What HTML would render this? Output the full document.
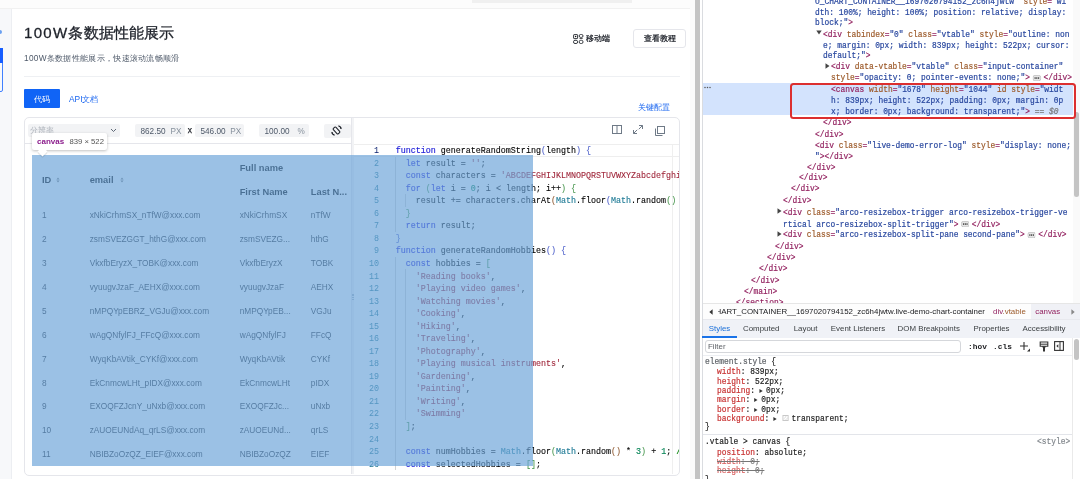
<!DOCTYPE html><html><head><meta charset="utf-8"><style>
*{margin:0;padding:0;box-sizing:border-box}
html,body{width:1080px;height:479px;overflow:hidden;background:#fff;font-family:"Liberation Sans",sans-serif}
#root{position:absolute;left:0;top:0;width:1080px;height:479px;will-change:transform}
.a{position:absolute;white-space:nowrap}
.mono{font-family:"Liberation Mono",monospace}
#page{position:absolute;left:0;top:0;width:700px;height:479px;background:#fff;overflow:hidden}
#dt{position:absolute;left:700px;top:0;width:380px;height:479px;background:#fff;overflow:hidden}
.cl{position:absolute;left:0;height:12.54px;line-height:12.54px;font-family:"Liberation Mono",monospace;font-size:8.36px;white-space:pre;color:#000;-webkit-text-stroke:0.1px currentColor}
.ln{position:absolute;width:30px;text-align:right;left:349px;height:12.54px;line-height:12.54px;font-family:"Liberation Mono",monospace;font-size:8.4px;color:#237893}
.k{color:#1c1cd8;-webkit-text-stroke:0.15px #1c1cd8}.s{color:#a0283c}.n{color:#098658;-webkit-text-stroke:0.15px #098658}.t{color:#267f99;-webkit-text-stroke:0.15px #267f99}.c{color:#008000;-webkit-text-stroke:0.15px #008000}
.b1{color:#5566cc}.b2{color:#4f9a55}.b3{color:#94603a}
.tr{position:absolute;font-size:8.3px;color:#1d2129;line-height:12px;white-space:nowrap}
.th{position:absolute;font-size:9.3px;font-weight:bold;color:#000;line-height:12px;white-space:nowrap}
.dl{position:absolute;height:11px;line-height:11px;font-family:"Liberation Mono",monospace;font-size:9.05px;white-space:pre;color:#27469e;transform:scaleX(0.873);transform-origin:0 50%;-webkit-text-stroke:0.2px currentColor}
.tg{color:#92215f;-webkit-text-stroke:0.2px #92215f}.an{color:#9c5a2a;-webkit-text-stroke:0.2px #9c5a2a}.av{color:#27469e;-webkit-text-stroke:0.2px #27469e}
.ui{font-size:7.9px}
.sl{position:absolute;height:9.44px;line-height:9.44px;font-family:"Liberation Mono",monospace;font-size:9.05px;white-space:pre;color:#1f1f1f;transform:scaleX(0.873);transform-origin:0 50%;-webkit-text-stroke:0.2px currentColor}
.pn{color:#c83232;-webkit-text-stroke:0.2px #c83232}
</style></head><body><div id="root">
<div id="page">
<div class="a" style="left:0;top:0;width:694px;height:9px;background:#fcfcfc;border-bottom:1px solid #f1f1f1"></div>
<div class="a" style="left:472px;top:0;width:160px;height:2.5px;background:#f0f0f0"></div>
<div class="a" style="left:0;top:9px;width:12px;height:470px;background:#f7f8fa;border-right:1px solid #eceef2"></div>
<div class="a" style="left:0;top:30px;width:2px;height:4px;background:#6aa0f0;border-radius:0 2px 2px 0"></div>
<div class="a" style="left:-2px;top:48px;width:5px;height:44px;border:1px solid #4080ff;border-radius:2px"></div>
<div class="a" style="left:-2px;top:48px;width:5px;height:15px;background:#165dff"></div>
<div class="a" style="left:24px;top:24px;font-size:15px;letter-spacing:0.13px;font-weight:normal;-webkit-text-stroke:0.3px #1d2129;color:#1d2129;line-height:18px"><span style="letter-spacing:1.3px">100W</span>条数据性能展示</div>
<div class="a" style="left:24px;top:52.7px;font-size:8.3px;letter-spacing:0.3px;color:#4e5969;line-height:11px">100W条数据性能展示，快速滚动流畅顺滑</div>
<svg class="a" style="left:573px;top:34px" width="11" height="11" viewBox="0 0 11 11"><g fill="none" stroke="#2b2f36" stroke-width="0.95"><rect x="0.6" y="0.6" width="4" height="4" rx="0.5"/><rect x="6.2" y="0.5" width="3.8" height="2.9" rx="1.4"/><rect x="0.5" y="6.3" width="4.1" height="3.2" rx="1.5"/><rect x="6.2" y="6.3" width="3.8" height="3.2" rx="1.5"/></g><circle cx="2.6" cy="2.6" r="0.75" fill="#111"/><rect x="6.4" y="4.1" width="3.4" height="0.8" rx="0.4" fill="#555"/></svg>
<div class="a" style="left:586px;top:33px;font-size:8.4px;color:#1d2129;line-height:11px;-webkit-text-stroke:0.25px #1d2129">移动端</div>
<div class="a" style="left:633px;top:29px;width:53px;height:19px;border:1px solid #e5e6eb;border-radius:3px;font-size:8.4px;line-height:17px;text-align:center;color:#1d2129;-webkit-text-stroke:0.25px #1d2129">查看教程</div>
<div class="a" style="left:24px;top:76px;width:656px;height:1px;background:#eef0f3"></div>
<div class="a" style="left:24px;top:89px;width:35.5px;height:18.5px;background:#1064f6;color:#fff;line-height:20.5px;text-align:center;border-radius:1px;font-size:8.4px">代码</div>
<div class="a" style="left:69px;top:90px;font-size:8.4px;line-height:19px;color:#1a66f0">API文档</div>
<div class="a" style="left:638px;top:101px;font-size:8.4px;line-height:12px;color:#1a66f0">关键配置</div>
<div class="a" style="left:24px;top:117px;width:656px;height:359px;border:1px solid #e5e6eb;border-radius:5px"></div>
<div class="a" style="left:0;top:0;width:700px;height:479px;clip-path:inset(118px 21px 5px 25px round 4px)">
<div class="a" style="left:25px;top:143px;width:326px;height:1px;background:#e5e6eb"></div>
<div class="a" style="left:28px;top:124px;width:92px;height:13px;background:#f2f3f5;border-radius:2px"></div>
<div class="a" style="left:30px;top:125px;font-size:7.9px;line-height:11px;color:#aeb3bb">分辨率</div>
<svg class="a" style="left:110px;top:128px" width="7" height="5" viewBox="0 0 7 5"><path d="M1 1 L3.5 3.5 L6 1" fill="none" stroke="#4e5969" stroke-width="0.9"/></svg>
<div class="a" style="left:135px;top:124px;width:50px;height:13px;background:#f2f3f5;border-radius:2px"></div>
<div class="a" style="left:140.5px;top:125.5px;font-size:8.2px;line-height:11px;color:#4e5969">862.50</div>
<div class="a" style="left:170.6px;top:125.5px;font-size:8.2px;line-height:11px;color:#86909c">PX</div>
<div class="a" style="left:195px;top:124px;width:49px;height:13px;background:#f2f3f5;border-radius:2px"></div>
<div class="a" style="left:200.5px;top:125.5px;font-size:8.2px;line-height:11px;color:#4e5969">546.00</div>
<div class="a" style="left:230.2px;top:125.5px;font-size:8.2px;line-height:11px;color:#86909c">PX</div>
<div class="a" style="left:259px;top:124px;width:50px;height:13px;background:#f2f3f5;border-radius:2px"></div>
<div class="a" style="left:264.5px;top:125.5px;font-size:8.2px;line-height:11px;color:#4e5969">100.00</div>
<div class="a" style="left:297.5px;top:125.5px;font-size:8.2px;line-height:11px;color:#86909c">%</div>
<div class="a" style="left:187.8px;top:125px;font-size:8.4px;line-height:11px;color:#1d2129;-webkit-text-stroke:0.25px #1d2129">x</div>
<div class="a" style="left:324px;top:123.5px;width:26.5px;height:14px;background:#f2f3f5;border-radius:2px"></div>
<svg class="a" style="left:331.4px;top:125.3px" width="11" height="11" viewBox="0 0 11 11"><g fill="none" stroke="#1d2129" stroke-width="1.05"><rect x="3.7" y="1.9" width="3.6" height="7.2" rx="0.9" transform="rotate(-42 5.5 5.5)"/><path d="M7.4 0.9 Q9.6 1.2 10.1 3.6" stroke-width="1.1"/><path d="M3.6 10.1 Q1.4 9.8 0.9 7.4" stroke-width="1.1"/></g><path d="M10.8 2.6 L10.1 4.3 L9.0 3.0 Z" fill="#1d2129"/><path d="M0.2 8.4 L0.9 6.7 L2.0 8.0 Z" fill="#1d2129"/></svg>
<div class="a" style="left:32px;top:155px;width:320px;height:311px;background:#fff"></div>
<div class="th" style="left:42px;top:174px">ID</div>
<svg class="a" style="left:56.2px;top:176.5px" width="4" height="6" viewBox="0 0 4 6"><path d="M0.4 2.4 L2 0.6 L3.6 2.4 Z M0.4 3.6 L2 5.4 L3.6 3.6 Z" fill="#777"/></svg>
<div class="th" style="left:89.7px;top:174px">email</div>
<svg class="a" style="left:119.5px;top:176.5px" width="4" height="6" viewBox="0 0 4 6"><path d="M0.4 2.4 L2 0.6 L3.6 2.4 Z M0.4 3.6 L2 5.4 L3.6 3.6 Z" fill="#777"/></svg>
<div class="th" style="left:239.7px;top:162px">Full name</div>
<div class="th" style="left:239.7px;top:185.8px">First Name</div>
<div class="th" style="left:310.8px;top:185.8px">Last N...</div>
<div class="tr" style="left:42px;top:209.40px;color:#1d2129">1</div>
<div class="tr" style="left:89.7px;top:209.40px;color:#1d2129">xNkiCrhmSX_nTfW@xxx.com</div>
<div class="tr" style="left:239.7px;top:209.40px;color:#1d2129">xNkiCrhmSX</div>
<div class="tr" style="left:310.8px;top:209.40px;color:#1d2129">nTfW</div>
<div class="tr" style="left:42px;top:233.28px;color:#1d2129">2</div>
<div class="tr" style="left:89.7px;top:233.28px;color:#1d2129">zsmSVEZGGT_hthG@xxx.com</div>
<div class="tr" style="left:239.7px;top:233.28px;color:#1d2129">zsmSVEZG...</div>
<div class="tr" style="left:310.8px;top:233.28px;color:#1d2129">hthG</div>
<div class="tr" style="left:42px;top:257.16px;color:#1d2129">3</div>
<div class="tr" style="left:89.7px;top:257.16px;color:#1d2129">VkxfbEryzX_TOBK@xxx.com</div>
<div class="tr" style="left:239.7px;top:257.16px;color:#1d2129">VkxfbEryzX</div>
<div class="tr" style="left:310.8px;top:257.16px;color:#1d2129">TOBK</div>
<div class="tr" style="left:42px;top:281.04px;color:#1d2129">4</div>
<div class="tr" style="left:89.7px;top:281.04px;color:#1d2129">vyuugvJzaF_AEHX@xxx.com</div>
<div class="tr" style="left:239.7px;top:281.04px;color:#1d2129">vyuugvJzaF</div>
<div class="tr" style="left:310.8px;top:281.04px;color:#1d2129">AEHX</div>
<div class="tr" style="left:42px;top:304.92px;color:#1d2129">5</div>
<div class="tr" style="left:89.7px;top:304.92px;color:#1d2129">nMPQYpEBRZ_VGJu@xxx.com</div>
<div class="tr" style="left:239.7px;top:304.92px;color:#1d2129">nMPQYpEB...</div>
<div class="tr" style="left:310.8px;top:304.92px;color:#1d2129">VGJu</div>
<div class="tr" style="left:42px;top:328.80px;color:#1d2129">6</div>
<div class="tr" style="left:89.7px;top:328.80px;color:#1d2129">wAgQNfylFJ_FFcQ@xxx.com</div>
<div class="tr" style="left:239.7px;top:328.80px;color:#1d2129">wAgQNfylFJ</div>
<div class="tr" style="left:310.8px;top:328.80px;color:#1d2129">FFcQ</div>
<div class="tr" style="left:42px;top:352.68px;color:#1d2129">7</div>
<div class="tr" style="left:89.7px;top:352.68px;color:#1d2129">WyqKbAVtik_CYKf@xxx.com</div>
<div class="tr" style="left:239.7px;top:352.68px;color:#1d2129">WyqKbAVtik</div>
<div class="tr" style="left:310.8px;top:352.68px;color:#1d2129">CYKf</div>
<div class="tr" style="left:42px;top:376.56px;color:#1d2129">8</div>
<div class="tr" style="left:89.7px;top:376.56px;color:#1d2129">EkCnmcwLHt_pIDX@xxx.com</div>
<div class="tr" style="left:239.7px;top:376.56px;color:#1d2129">EkCnmcwLHt</div>
<div class="tr" style="left:310.8px;top:376.56px;color:#1d2129">pIDX</div>
<div class="tr" style="left:42px;top:400.44px;color:#1d2129">9</div>
<div class="tr" style="left:89.7px;top:400.44px;color:#1d2129">EXOQFZJcnY_uNxb@xxx.com</div>
<div class="tr" style="left:239.7px;top:400.44px;color:#1d2129">EXOQFZJc...</div>
<div class="tr" style="left:310.8px;top:400.44px;color:#1d2129">uNxb</div>
<div class="tr" style="left:42px;top:424.32px;color:#1d2129">10</div>
<div class="tr" style="left:89.7px;top:424.32px;color:#1d2129">zAUOEUNdAq_qrLS@xxx.com</div>
<div class="tr" style="left:239.7px;top:424.32px;color:#1d2129">zAUOEUNd...</div>
<div class="tr" style="left:310.8px;top:424.32px;color:#1d2129">qrLS</div>
<div class="tr" style="left:42px;top:448.20px;color:#1d2129">11</div>
<div class="tr" style="left:89.7px;top:448.20px;color:#1d2129">NBIBZoOzQZ_EIEF@xxx.com</div>
<div class="tr" style="left:239.7px;top:448.20px;color:#1d2129">NBIBZoOzQZ</div>
<div class="tr" style="left:310.8px;top:448.20px;color:#1d2129">EIEF</div>
<div class="a" style="left:351px;top:118px;width:3px;height:360px;background:#f2f3f5;border-left:1px solid #e5e6eb"></div>
<div class="a" style="left:352px;top:294px;width:2px;height:6px;border-left:1px dotted #a9b4c0;border-right:1px dotted #a9b4c0"></div>
<div class="a" style="left:354px;top:144px;width:326px;height:1px;background:#e5e6eb"></div>
<svg class="a" style="left:612px;top:125px" width="10" height="9" viewBox="0 0 10 9"><g fill="none" stroke="#6f7a87" stroke-width="1"><rect x="0.5" y="0.5" width="9" height="8"/><path d="M5 0.5 V8.5"/></g></svg>
<svg class="a" style="left:633px;top:125px" width="10" height="9" viewBox="0 0 10 9"><g fill="none" stroke="#6f7a87" stroke-width="1"><path d="M6 0.5 H9.5 V4 M9.5 0.5 L5.8 4.2 M4 8.5 H0.5 V5 M0.5 8.5 L4.2 4.8"/></g></svg>
<svg class="a" style="left:655px;top:126px" width="10" height="10" viewBox="0 0 10 10"><g fill="none" stroke="#6f7a87" stroke-width="1"><rect x="2.5" y="0.5" width="7" height="7"/><path d="M0.5 2.5 V9.5 H7.5"/></g></svg>
<div class="a" style="left:354px;top:144px;width:326px;height:12.5px;border-top:1px solid #eee;border-bottom:1px solid #eee"></div>
<div class="a" style="left:671.5px;top:145px;width:1px;height:330px;background:#efefef"></div>
<div class="ln" style="top:145.10px;color:#0b216f">1</div>
<div class="cl" style="left:395.7px;top:145.10px"><span class="k">function</span> generateRandomString<span class="b1">(</span>length<span class="b1">)</span> <span class="b1">{</span></div>
<div class="ln" style="top:157.64px;color:#237893">2</div>
<div class="cl" style="left:395.7px;top:157.64px">  <span class="k">let</span> result = <span class="s">''</span>;</div>
<div class="ln" style="top:170.18px;color:#237893">3</div>
<div class="cl" style="left:395.7px;top:170.18px">  <span class="k">const</span> characters = <span class="s">'ABCDEFGHIJKLMNOPQRSTUVWXYZabcdefghijklmnopqrstuvwxyz'</span>;</div>
<div class="ln" style="top:182.72px;color:#237893">4</div>
<div class="cl" style="left:395.7px;top:182.72px">  <span class="k">for</span> <span class="b2">(</span><span class="k">let</span> i = <span class="n">0</span>; i &lt; length; i++<span class="b2">)</span> <span class="b2">{</span></div>
<div class="ln" style="top:195.26px;color:#237893">5</div>
<div class="cl" style="left:395.7px;top:195.26px">    result += characters.charAt<span class="b3">(</span><span class="t">Math</span>.floor<span class="b1">(</span><span class="t">Math</span>.random<span class="b2">()</span> * characters.length<span class="b1">)</span><span class="b3">)</span>;</div>
<div class="ln" style="top:207.80px;color:#237893">6</div>
<div class="cl" style="left:395.7px;top:207.80px">  <span class="b2">}</span></div>
<div class="ln" style="top:220.34px;color:#237893">7</div>
<div class="cl" style="left:395.7px;top:220.34px">  <span class="k">return</span> result;</div>
<div class="ln" style="top:232.88px;color:#237893">8</div>
<div class="cl" style="left:395.7px;top:232.88px"><span class="b1">}</span></div>
<div class="ln" style="top:245.42px;color:#237893">9</div>
<div class="cl" style="left:395.7px;top:245.42px"><span class="k">function</span> generateRandomHobbies<span class="b1">()</span> <span class="b1">{</span></div>
<div class="ln" style="top:257.96px;color:#237893">10</div>
<div class="cl" style="left:395.7px;top:257.96px">  <span class="k">const</span> hobbies = <span class="b2">[</span></div>
<div class="ln" style="top:270.50px;color:#237893">11</div>
<div class="cl" style="left:395.7px;top:270.50px">    <span class="s">'Reading books'</span>,</div>
<div class="ln" style="top:283.04px;color:#237893">12</div>
<div class="cl" style="left:395.7px;top:283.04px">    <span class="s">'Playing video games'</span>,</div>
<div class="ln" style="top:295.58px;color:#237893">13</div>
<div class="cl" style="left:395.7px;top:295.58px">    <span class="s">'Watching movies'</span>,</div>
<div class="ln" style="top:308.12px;color:#237893">14</div>
<div class="cl" style="left:395.7px;top:308.12px">    <span class="s">'Cooking'</span>,</div>
<div class="ln" style="top:320.66px;color:#237893">15</div>
<div class="cl" style="left:395.7px;top:320.66px">    <span class="s">'Hiking'</span>,</div>
<div class="ln" style="top:333.20px;color:#237893">16</div>
<div class="cl" style="left:395.7px;top:333.20px">    <span class="s">'Traveling'</span>,</div>
<div class="ln" style="top:345.74px;color:#237893">17</div>
<div class="cl" style="left:395.7px;top:345.74px">    <span class="s">'Photography'</span>,</div>
<div class="ln" style="top:358.28px;color:#237893">18</div>
<div class="cl" style="left:395.7px;top:358.28px">    <span class="s">'Playing musical instruments'</span>,</div>
<div class="ln" style="top:370.82px;color:#237893">19</div>
<div class="cl" style="left:395.7px;top:370.82px">    <span class="s">'Gardening'</span>,</div>
<div class="ln" style="top:383.36px;color:#237893">20</div>
<div class="cl" style="left:395.7px;top:383.36px">    <span class="s">'Painting'</span>,</div>
<div class="ln" style="top:395.90px;color:#237893">21</div>
<div class="cl" style="left:395.7px;top:395.90px">    <span class="s">'Writing'</span>,</div>
<div class="ln" style="top:408.44px;color:#237893">22</div>
<div class="cl" style="left:395.7px;top:408.44px">    <span class="s">'Swimming'</span></div>
<div class="ln" style="top:420.98px;color:#237893">23</div>
<div class="cl" style="left:395.7px;top:420.98px">  <span class="b2">]</span>;</div>
<div class="ln" style="top:433.52px;color:#237893">24</div>
<div class="cl" style="left:395.7px;top:433.52px"></div>
<div class="ln" style="top:446.06px;color:#237893">25</div>
<div class="cl" style="left:395.7px;top:446.06px">  <span class="k">const</span> numHobbies = <span class="t">Math</span>.floor<span class="b2">(</span><span class="t">Math</span>.random<span class="b3">()</span> * <span class="n">3</span><span class="b2">)</span> + <span class="n">1</span>; <span class="c">// Randomly select 1 to 3 hobbies</span></div>
<div class="ln" style="top:458.60px;color:#237893">26</div>
<div class="cl" style="left:395.7px;top:458.60px">  <span class="k">const</span> selectedHobbies = <span class="b2">[]</span>;</div>
<div class="a" style="left:394.8px;top:156.54px;width:1px;height:75.24px;background:#d3d3d3"></div>
<div class="a" style="left:404.9px;top:194.16px;width:1px;height:12.54px;background:#d3d3d3"></div>
<div class="a" style="left:394.8px;top:256.86px;width:1px;height:213.18px;background:#d3d3d3"></div>
<div class="a" style="left:404.9px;top:269.40px;width:1px;height:150.48px;background:#d3d3d3"></div>
<div class="a" style="left:32px;top:155px;width:501px;height:311px;background:rgba(108,164,217,0.68)"></div>
</div>
<div class="a" style="left:32px;top:133px;width:75px;height:17px;background:#fff;border-radius:2px;box-shadow:0 1px 3px rgba(0,0,0,0.25)"></div>
<div class="a" style="left:39px;top:148px;width:7px;height:7px;background:#fff;transform:rotate(45deg);box-shadow:1px 1px 1px rgba(0,0,0,0.12)"></div>
<div class="a" style="left:37px;top:136px;font-size:8px;line-height:11px;font-weight:bold;color:#8b1c8c">canvas</div>
<div class="a" style="left:69.5px;top:136px;font-size:7.7px;line-height:11px;color:#555">839 × 522</div>
<div class="a" style="left:690px;top:0;width:5px;height:479px;background:#fafafa"></div>
<div class="a" style="left:695px;top:0;width:5px;height:479px;background:#c3c3c3"></div>
</div>
<div id="dt">
<div class="a" style="left:2px;top:0;width:1px;height:479px;background:#dadce0"></div>
<div class="a" style="left:3px;top:83px;width:370px;height:32.3px;background:#d3e3fd"></div>
<svg class="a" style="left:4px;top:86px" width="7" height="3" viewBox="0 0 7 3"><circle cx="1" cy="1.5" r="0.75" fill="#555"/><circle cx="3.5" cy="1.5" r="0.75" fill="#555"/><circle cx="6" cy="1.5" r="0.75" fill="#555"/></svg>
<div class="dl" style="left:115.2px;top:-3.9px"><span class="av">O_CHART_CONTAINER__1697020794152_zc6h4jwtw&quot;</span> <span class="an">style</span><span class="tg">=</span><span class="av">&quot;wi</span></div>
<div class="dl" style="left:115.2px;top:7.1px"><span class="av">dth: 100%; height: 100%; position: relative; display:</span></div>
<div class="dl" style="left:115.2px;top:17.1px"><span class="av">block;&quot;</span><span class="tg">&gt;</span></div>
<div class="dl" style="left:123.2px;top:28.7px"><span class="tg">&lt;div</span> <span class="an">tabindex</span><span class="tg">=</span><span class="av">&quot;0&quot;</span> <span class="an">class</span><span class="tg">=</span><span class="av">&quot;vtable&quot;</span> <span class="an">style</span><span class="tg">=</span><span class="av">&quot;outline: non</span></div>
<div class="dl" style="left:123.2px;top:39.7px"><span class="av">e; margin: 0px; width: 839px; height: 522px; cursor:</span></div>
<div class="dl" style="left:123.2px;top:49.7px"><span class="av">default;&quot;</span><span class="tg">&gt;</span></div>
<div class="dl" style="left:131.1px;top:61.4px"><span class="tg">&lt;div</span> <span class="an">data-vtable</span><span class="tg">=</span><span class="av">&quot;vtable&quot;</span> <span class="an">class</span><span class="tg">=</span><span class="av">&quot;input-container&quot;</span></div>
<div class="dl" style="left:131.1px;top:72.4px"><span class="an">style</span><span class="tg">=</span><span class="av">&quot;opacity: 0; pointer-events: none;&quot;</span><span class="tg">&gt;</span><svg style="display:inline-block;vertical-align:middle;margin:0 2.9px;position:relative;top:-0.3px" width="9.6" height="6.2" viewBox="0 0 9.6 6.2"><rect x="0.35" y="0.35" width="8.9" height="5.5" rx="2.2" fill="#e6e6e6" stroke="#a8a8a8" stroke-width="0.6"/><circle cx="2.8" cy="3.1" r="0.8" fill="#333"/><circle cx="4.8" cy="3.1" r="0.8" fill="#333"/><circle cx="6.8" cy="3.1" r="0.8" fill="#333"/></svg><span class="tg">&lt;/div&gt;</span></div>
<div class="dl" style="left:131.1px;top:84.3px"><span class="tg">&lt;canvas</span> <span class="an">width</span><span class="tg">=</span><span class="av">&quot;1678&quot;</span> <span class="an">height</span><span class="tg">=</span><span class="av">&quot;1044&quot;</span> <span class="an">id</span> <span class="an">style</span><span class="tg">=</span><span class="av">&quot;widt</span></div>
<div class="dl" style="left:131.1px;top:95.1px"><span class="av">h: 839px; height: 522px; padding: 0px; margin: 0p</span></div>
<div class="dl" style="left:131.1px;top:106.0px"><span class="av">x; border: 0px; background: transparent;&quot;</span><span class="tg">&gt;</span><span style="color:#777;font-style:italic"> == $0</span></div>
<div class="dl" style="left:123.2px;top:116.9px"><span class="tg">&lt;/div&gt;</span></div>
<div class="dl" style="left:115.2px;top:128.6px"><span class="tg">&lt;/div&gt;</span></div>
<div class="dl" style="left:115.2px;top:139.6px"><span class="tg">&lt;div</span> <span class="an">class</span><span class="tg">=</span><span class="av">&quot;live-demo-error-log&quot;</span> <span class="an">style</span><span class="tg">=</span><span class="av">&quot;display: none;</span></div>
<div class="dl" style="left:115.2px;top:150.5px"><span class="av">&quot;</span><span class="tg">&gt;&lt;/div&gt;</span></div>
<div class="dl" style="left:107.2px;top:161.5px"><span class="tg">&lt;/div&gt;</span></div>
<div class="dl" style="left:99.3px;top:172.3px"><span class="tg">&lt;/div&gt;</span></div>
<div class="dl" style="left:91.3px;top:183.4px"><span class="tg">&lt;/div&gt;</span></div>
<div class="dl" style="left:83.3px;top:195.4px"><span class="tg">&lt;/div&gt;</span></div>
<div class="dl" style="left:83.3px;top:206.9px"><span class="tg">&lt;div</span> <span class="an">class</span><span class="tg">=</span><span class="av">&quot;arco-resizebox-trigger arco-resizebox-trigger-ve</span></div>
<div class="dl" style="left:83.3px;top:218.5px"><span class="av">rtical arco-resizebox-split-trigger&quot;</span><span class="tg">&gt;</span><svg style="display:inline-block;vertical-align:middle;margin:0 2.9px;position:relative;top:-0.3px" width="9.6" height="6.2" viewBox="0 0 9.6 6.2"><rect x="0.35" y="0.35" width="8.9" height="5.5" rx="2.2" fill="#e6e6e6" stroke="#a8a8a8" stroke-width="0.6"/><circle cx="2.8" cy="3.1" r="0.8" fill="#333"/><circle cx="4.8" cy="3.1" r="0.8" fill="#333"/><circle cx="6.8" cy="3.1" r="0.8" fill="#333"/></svg><span class="tg">&lt;/div&gt;</span></div>
<div class="dl" style="left:83.3px;top:229.3px"><span class="tg">&lt;div</span> <span class="an">class</span><span class="tg">=</span><span class="av">&quot;arco-resizebox-split-pane second-pane&quot;</span><span class="tg">&gt;</span><svg style="display:inline-block;vertical-align:middle;margin:0 2.9px;position:relative;top:-0.3px" width="9.6" height="6.2" viewBox="0 0 9.6 6.2"><rect x="0.35" y="0.35" width="8.9" height="5.5" rx="2.2" fill="#e6e6e6" stroke="#a8a8a8" stroke-width="0.6"/><circle cx="2.8" cy="3.1" r="0.8" fill="#333"/><circle cx="4.8" cy="3.1" r="0.8" fill="#333"/><circle cx="6.8" cy="3.1" r="0.8" fill="#333"/></svg><span class="tg">&lt;/div&gt;</span></div>
<div class="dl" style="left:75.4px;top:240.5px"><span class="tg">&lt;/div&gt;</span></div>
<div class="dl" style="left:67.4px;top:252.3px"><span class="tg">&lt;/div&gt;</span></div>
<div class="dl" style="left:59.4px;top:263.4px"><span class="tg">&lt;/div&gt;</span></div>
<div class="dl" style="left:51.4px;top:274.6px"><span class="tg">&lt;/div&gt;</span></div>
<div class="dl" style="left:43.5px;top:286.2px"><span class="tg">&lt;/main&gt;</span></div>
<div class="dl" style="left:35.5px;top:296.9px"><span class="tg">&lt;/section&gt;</span></div>
<svg class="a" style="left:116.2px;top:30.3px" width="6" height="5" viewBox="0 0 6 5"><path d="M0.3 0.5 H5.7 L3 4.5 Z" fill="#444"/></svg>
<svg class="a" style="left:124.6px;top:62.8px" width="5" height="6" viewBox="0 0 5 6"><path d="M0.5 0.3 V5.7 L4.5 3 Z" fill="#444"/></svg>
<svg class="a" style="left:76.8px;top:208.3px" width="5" height="6" viewBox="0 0 5 6"><path d="M0.5 0.3 V5.7 L4.5 3 Z" fill="#444"/></svg>
<svg class="a" style="left:76.8px;top:230.7px" width="5" height="6" viewBox="0 0 5 6"><path d="M0.5 0.3 V5.7 L4.5 3 Z" fill="#444"/></svg>
<div class="a" style="left:373px;top:0;width:7px;height:303px;background:#fafafa"></div>
<div class="a" style="left:374px;top:112px;width:5px;height:85px;background:#c4c4c4;border-radius:3px"></div>
<div class="a" style="left:3px;top:303px;width:377px;height:16px;background:#fdfdfd;border-top:1px solid #e6e6e6"></div>
<svg class="a" style="left:8.5px;top:308.5px" width="4" height="6" viewBox="0 0 4 6"><path d="M3.6 0.3 V5.7 L0.3 3 Z" fill="#333"/></svg>
<div class="a ui" style="left:18px;top:304px;width:300px;height:15px;overflow:hidden"><div class="a ui" style="left:-2.5px;top:0;line-height:15px;color:#202124">HART_CONTAINER__1697020794152_zc6h4jwtw.live-demo-chart-container</div></div>
<div class="a ui" style="left:293px;top:304px;line-height:15px"><span style="color:#92215f">div</span><span style="color:#9c5a2a">.vtable</span></div>
<div class="a" style="left:331px;top:304px;width:49px;height:14.5px;background:#f0f1f6"></div>
<div class="a ui" style="left:335.2px;top:304px;line-height:15px;color:#92215f">canvas</div>
<svg class="a" style="left:371px;top:309px" width="4" height="6" viewBox="0 0 4 6"><path d="M0.4 0.3 V5.7 L3.7 3 Z" fill="#888"/></svg>
<div class="a" style="left:3px;top:318.5px;width:377px;height:19px;background:#f0f2f7;border-top:1px solid #e8e9ee"></div>
<div class="a ui" style="left:8.8px;top:322.5px;line-height:12px;color:#1a6fd8">Styles</div>
<div class="a ui" style="left:43.0px;top:322.5px;line-height:12px;color:#3c4043">Computed</div>
<div class="a ui" style="left:93.7px;top:322.5px;line-height:12px;color:#3c4043">Layout</div>
<div class="a ui" style="left:130.8px;top:322.5px;line-height:12px;color:#3c4043">Event Listeners</div>
<div class="a ui" style="left:197.6px;top:322.5px;line-height:12px;color:#3c4043">DOM Breakpoints</div>
<div class="a ui" style="left:273.5px;top:322.5px;line-height:12px;color:#3c4043">Properties</div>
<div class="a ui" style="left:322.6px;top:322.5px;line-height:12px;color:#3c4043">Accessibility</div>
<div class="a" style="left:2px;top:336.3px;width:34.5px;height:1.6px;background:#1a73e8"></div>
<div class="a" style="left:4.5px;top:340px;width:256px;height:12.5px;border:1px solid #d5d7db;border-radius:3px;background:#fff"></div>
<div class="a ui" style="left:8px;top:340.5px;line-height:11.5px;color:#5f6368">Filter</div>
<div class="a mono" style="left:268px;top:340.5px;line-height:11.5px;font-size:7.87px;font-weight:bold;color:#202124">:hov</div>
<div class="a mono" style="left:293px;top:340.5px;line-height:11.5px;font-size:7.87px;font-weight:bold;color:#202124">.cls</div>
<svg class="a" style="left:319px;top:341px" width="12" height="11" viewBox="0 0 12 11"><path d="M5 1 V9 M1 5 H9" stroke="#333" stroke-width="1.1" fill="none"/><path d="M11 7.5 V10.5 H8 Z" fill="#333"/></svg>
<svg class="a" style="left:338.5px;top:340.5px" width="10" height="11" viewBox="0 0 10 11"><path d="M1.2 1 H8.8 V5.2 H1.2 Z" fill="none" stroke="#333" stroke-width="1.1"/><path d="M1.2 3.2 H8.8" stroke="#333" stroke-width="1"/><path d="M3 5.2 H7 L6 7 V10.5 H4 V7 Z" fill="#333"/></svg>
<svg class="a" style="left:354px;top:341px" width="10" height="10" viewBox="0 0 10 10"><rect x="0.6" y="0.6" width="8.8" height="8.8" fill="none" stroke="#333" stroke-width="1.1"/><path d="M6 0.6 V9.4" stroke="#333" stroke-width="1"/><path d="M4.3 3.2 V6.8 L2.3 5 Z" fill="#333"/></svg>
<div class="a" style="left:3px;top:354.5px;width:369px;height:1px;background:#eceef2"></div>
<div class="a" style="left:371.5px;top:338px;width:1px;height:141px;background:#eaeaea"></div>
<div class="a" style="left:374px;top:339px;width:4.5px;height:21px;background:#c4c4c4;border-radius:3px"></div>
<div class="sl" style="left:5.4px;top:356.58px"><span style="color:#5f6368">element.style</span> {</div>
<div class="sl" style="left:17.2px;top:367.38px"><span class="pn">width</span>: 839px;</div>
<div class="sl" style="left:17.2px;top:376.78px"><span class="pn">height</span>: 522px;</div>
<div class="sl" style="left:17.2px;top:386.18px"><span class="pn">padding</span>: <span style="display:inline-block;width:7.3px;position:relative"><svg style="position:absolute;left:-1.2px;top:-5px" width="5" height="6" viewBox="0 0 5 6"><path d="M0.6 0.9 V5.1 L4.4 3 Z" fill="#333"/></svg></span>0px;</div>
<div class="sl" style="left:17.2px;top:395.48px"><span class="pn">margin</span>: <span style="display:inline-block;width:7.3px;position:relative"><svg style="position:absolute;left:-1.2px;top:-5px" width="5" height="6" viewBox="0 0 5 6"><path d="M0.6 0.9 V5.1 L4.4 3 Z" fill="#333"/></svg></span>0px;</div>
<div class="sl" style="left:17.2px;top:404.78px"><span class="pn">border</span>: <span style="display:inline-block;width:7.3px;position:relative"><svg style="position:absolute;left:-1.2px;top:-5px" width="5" height="6" viewBox="0 0 5 6"><path d="M0.6 0.9 V5.1 L4.4 3 Z" fill="#333"/></svg></span>0px;</div>
<div class="sl" style="left:17.2px;top:413.68px"><span class="pn">background</span>: <span style="display:inline-block;width:7.3px;position:relative"><svg style="position:absolute;left:-1.2px;top:-5px" width="5" height="6" viewBox="0 0 5 6"><path d="M0.6 0.9 V5.1 L4.4 3 Z" fill="#333"/></svg></span><span style="display:inline-block;width:7.4px;height:6.6px;margin:0 3.2px 0 2.3px;vertical-align:-0.8px;background:#fff;border:0.6px solid #c8c8c8;background-image:linear-gradient(45deg,#d8d8d8 25%,transparent 25%,transparent 75%,#d8d8d8 75%),linear-gradient(45deg,#d8d8d8 25%,transparent 25%,transparent 75%,#d8d8d8 75%);background-size:3.4px 3.4px;background-position:0 0,1.7px 1.7px"></span>transparent;</div>
<div class="sl" style="left:5.4px;top:422.48px">}</div>
<div class="a" style="left:3px;top:434px;width:369px;height:1px;background:#e3e5ea"></div>
<div class="sl" style="left:5.4px;top:437.28px">.vtable &gt; canvas {</div>
<div class="sl" style="left:17.2px;top:447.88px"><span class="pn">position</span>: absolute;</div>
<div class="sl" style="left:17.2px;top:456.88px"><span style="text-decoration:line-through;color:#777"><span style="color:#d86060">width</span>: 0;</span></div>
<div class="sl" style="left:17.2px;top:466.18px"><span style="text-decoration:line-through;color:#777"><span style="color:#d86060">height</span>: 0;</span></div>
<div class="sl" style="left:5.4px;top:475.28px">}</div>
<div class="sl" style="left:337.2px;top:437.3px;color:#80868b">&lt;style&gt;</div>
<div class="a" style="left:89.6px;top:82.8px;width:286px;height:36px;border:2px solid #dc2f2f;border-radius:3.5px"></div>
</div>
</div></body></html>
